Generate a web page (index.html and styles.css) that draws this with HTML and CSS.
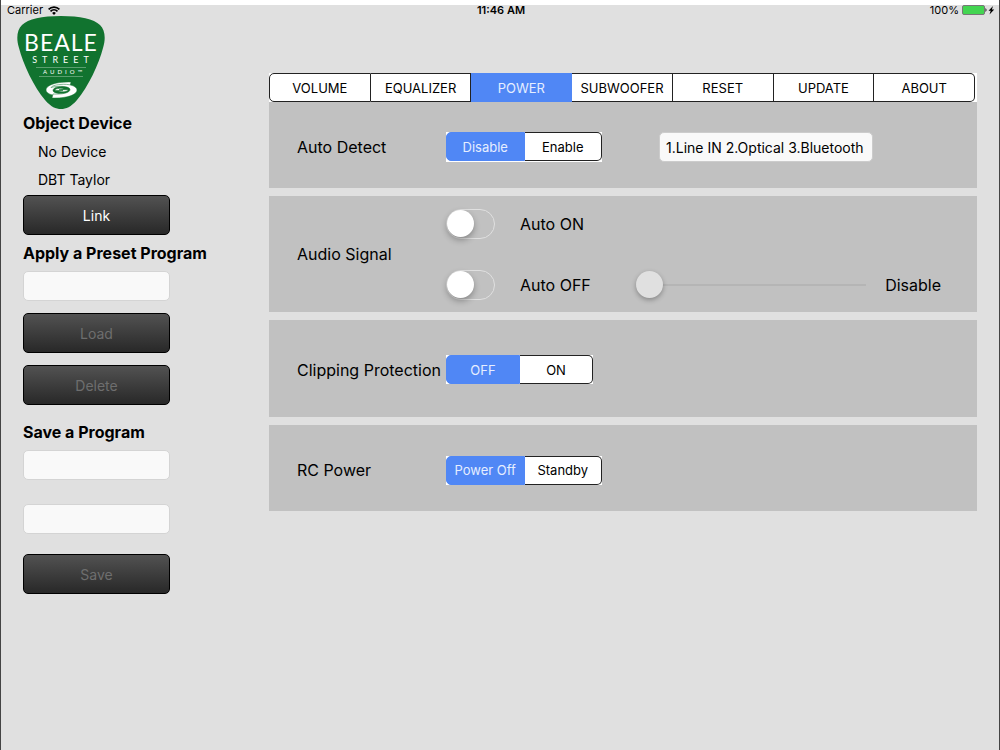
FILE: index.html
```
<!DOCTYPE html>
<html lang="en">
<head>
<meta charset="UTF-8">
<meta name="viewport" content="width=device-width, initial-scale=1">
<title>Beale Street Audio</title>
<link rel="stylesheet" href="styles.css">
</head>
<body>
<div class="app">

	<header class="status">
		<span class="carrier">Carrier
			<svg width="12" height="9" viewBox="0 0 12 9" fill="none" stroke="#000" stroke-width="1.7">
				<path d="M0.6 3.4a7.6 7.6 0 0 1 10.8 0"/>
				<path d="M2.5 5.4a5 5 0 0 1 7 0"/>
				<path d="M6 9L4.1 7a2.7 2.7 0 0 1 3.8 0z" fill="#000" stroke="none"/>
			</svg>
		</span>
		<span class="time">11:46 AM</span>
		<span class="battery">100%
			<svg width="33" height="10" viewBox="0 0 33 10">
				<rect x="0.5" y="0.5" width="22" height="9" rx="1.5" fill="#43d551" stroke="#777"/>
				<path d="M23.500 3q2 2 0 4z" fill="#000"/>
				<path d="M31 1l-4.500 4.700h2.200L27.500 9.500l4.700-5.100h-2.300z" fill="#000"/>
			</svg>
		</span>
	</header>

	<div class="main">
		<aside class="side">
			<svg class="logo" width="88" height="93" viewBox="0 0 88 93" role="img" aria-label="Beale Street Audio">
				<path d="M44 0C63 0 77 3 83 9C88 14 89 22 86 32C82 48 71 71 60 84C54 91 49 93 44 93C39 93 34 91 28 84C17 71 6 48 2 32C-1 22 0 14 5 9C11 3 25 0 44 0z" fill="#11732f"/>
				<g fill="#fff" text-anchor="middle">
					<text class="logo-big" x="44" y="35">BEALE</text>
					<text class="logo-mid" x="46" y="47">STREET</text>
					<text class="logo-small" x="47" y="58">AUDIO™</text>
				</g>
				<path d="M19 51.500h50M22 60.500h44" stroke="#6fab80" stroke-width="0.800"/>
				<g fill="#fff" stroke="#11732f" stroke-width="0.500">
					<path d="M54 66C40 65.500 29 69 29 74C29 78 37 80.500 46 79.500C51 79 54 78 55 76.500C48 78.500 36 78 36 74.500C36 71 44 69.500 53 70z"/>
					<path d="M54 66C40 65.500 29 69 29 74C29 78 37 80.500 46 79.500C51 79 54 78 55 76.500C48 78.500 36 78 36 74.500C36 71 44 69.500 53 70z" transform="rotate(180 44.500 74)"/>
					<path d="M38 74.500C38 72.500 43 72 47 72.500L42 73.700H51C51 75.500 46 76.200 41 75.500L46 74.500z"/>
				</g>
			</svg>

			<h2>Object Device</h2>
			<p class="device">No Device</p>
			<p class="device">DBT Taylor</p>
			<button type="button" class="btn link">Link</button>

			<h2><label for="preset">Apply a Preset Program</label></h2>
			<input type="text" id="preset" class="txt preset">
			<button type="button" class="btn" disabled>Load</button>
			<button type="button" class="btn" disabled>Delete</button>

			<h2 class="save-head">Save a Program</h2>
			<input type="text" class="txt save-name" aria-label="Program name">
			<input type="text" class="txt save-note" aria-label="Program description">
			<button type="button" class="btn" disabled>Save</button>
		</aside>

		<main class="content">
			<nav class="seg tabs">
				<button type="button">VOLUME</button>
				<button type="button">EQUALIZER</button>
				<button type="button" class="on">POWER</button>
				<button type="button">SUBWOOFER</button>
				<button type="button">RESET</button>
				<button type="button">UPDATE</button>
				<button type="button">ABOUT</button>
			</nav>

			<section class="panel">
				<h3>Auto Detect</h3>
				<div class="detect">
					<div class="seg seg-wide">
						<button type="button" class="on">Disable</button>
						<button type="button">Enable</button>
					</div>
					<input type="text" class="txt inputs" value="1.Line IN 2.Optical 3.Bluetooth" aria-label="Input priority">
				</div>
			</section>

			<section class="panel panel-audio">
				<h3>Audio Signal</h3>
				<div class="signal">
					<div class="signal-row">
						<input type="checkbox" id="autoOn" class="switch">
						<label for="autoOn">Auto ON</label>
					</div>
					<div class="signal-row">
						<input type="checkbox" id="autoOff" class="switch">
						<label for="autoOff">Auto OFF</label>
						<input type="range" id="offTime" class="slider" min="0" max="100" value="0" disabled>
						<label for="offTime">Disable</label>
					</div>
				</div>
			</section>

			<section class="panel panel-clip">
				<h3>Clipping Protection</h3>
				<div class="seg seg-narrow">
					<button type="button" class="on">OFF</button>
					<button type="button">ON</button>
				</div>
			</section>

			<section class="panel">
				<h3>RC Power</h3>
				<div class="seg seg-wide">
					<button type="button" class="on">Power Off</button>
					<button type="button">Standby</button>
				</div>
			</section>
		</main>
	</div>

</div>
</body>
</html>
```

FILE: styles.css
```
* { box-sizing: border-box; }

body {
	margin: 0;
	font-family: Inter, "Liberation Sans", sans-serif;
	color: #000;
}

button, input { font-family: inherit; }

.app {
	min-height: 100vh;
	background-color: #e0e0e0;
	border-left: 1px solid #444;
	border-right: 1px solid #444;
	box-shadow: inset 0 5px #fff;
}

/* status bar */
.status {
	display: grid;
	grid-template-columns: 1fr auto 1fr;
	padding: 4px 4px 0 6px;
	font-size: 11px;
	line-height: 12px;
}

.status span {
	display: flex;
	align-items: center;
	gap: 5px;
}

.status .time { font-weight: 600; }

.status .battery {
	justify-content: flex-end;
	gap: 3px;
}

.main { display: flex; }

/* left side */
.side {
	flex: 0 0 268px;
	display: flex;
	flex-direction: column;
	align-items: flex-start;
	padding-left: 22px;
}

.logo { margin-left: -6px; }

.logo-big { font: 400 23px Lato, sans-serif; letter-spacing: 1px; }
.logo-mid { font: 400 9px Lato, sans-serif; letter-spacing: 5px; }
.logo-small { font: 400 6px Lato, sans-serif; letter-spacing: 3px; }

h2 {
	margin: 4px 0 5px;
	font-size: 16px;
	line-height: 20px;
	font-weight: 700;
}

.device {
	margin: 0 0 0 15px;
	font-size: 14px;
	line-height: 28px;
}

.btn {
	width: 147px;
	height: 40px;
	margin-bottom: 12px;
	border: 1px solid #000;
	border-radius: 5px;
	background-image: linear-gradient(#525252, #282828);
	color: #fff;
	font-size: 14px;
}

.btn:disabled { color: #6e6e6e; }

.txt {
	width: 147px;
	height: 30px;
	padding: 0 6px;
	border: 1px solid #d4d4d4;
	border-radius: 5px;
	background-color: #f9f9f9;
	font-size: 14px;
}

.link { margin: 1px 0 4px; }
.preset { margin: 3px 0 12px; }
.save-head { margin: 5px 0 8px; }
.save-name { margin-bottom: 24px; }
.save-note { margin-bottom: 20px; }

/* right side */
.content {
	flex: 1;
	padding: 57px 22px 0 0;
}

/* segmented buttons */
.seg {
	display: flex;
	background-color: #fff;
}

.seg button {
	flex: 1 1 0;
	height: 29px;
	padding: 0;
	border: 1px solid #222;
	border-left-width: 0;
	background-color: #fff;
	color: #000;
	font-size: 13px;
}

.seg button:first-child {
	border-left-width: 1px;
	border-radius: 5px 0 0 5px;
}

.seg button:last-child { border-radius: 0 5px 5px 0; }

.seg .on, .seg .on:first-child {
	border-color: #5087f5;
	background-color: #5087f5;
	color: #e6eeff;
}

.tabs { padding-right: 2px; }
.seg-wide { width: 156px; }
.seg-narrow { width: 147px; }

.panel {
	display: grid;
	grid-template-columns: 149px 1fr;
	align-items: center;
	min-height: 86px;
	margin-bottom: 8px;
	padding: 4px 36px 0 28px;
	background-color: #c1c1c1;
}

.panel-audio {
	min-height: 116px;
	padding-top: 0;
}

.panel-clip {
	min-height: 97px;
	padding-top: 2px;
}

h3 {
	margin: 0;
	font-size: 16px;
	line-height: 20px;
	font-weight: 400;
	white-space: nowrap;
}

.detect {
	display: flex;
	gap: 57px;
}

.inputs {
	width: 214px;
	border-color: #ccc;
}

.signal {
	display: grid;
	gap: 31px;
}

.signal-row {
	display: grid;
	grid-template-columns: 74px 116px 1fr auto;
	align-items: center;
	font-size: 16px;
}

.switch {
	appearance: none;
	width: 49px;
	height: 30px;
	margin: 0;
	border: 1px solid #e0e0e0;
	border-radius: 15px;
}

.switch::before {
	content: "";
	display: block;
	width: 27px;
	height: 27px;
	border-radius: 50%;
	background-color: #fff;
	box-shadow: 0 3px 6px rgba(0, 0, 0, 0.3);
}

.switch:checked { background-color: #43d551; }
.switch:checked::before { margin-left: 20px; }

.slider {
	appearance: none;
	width: auto;
	min-width: 0;
	height: 27px;
	margin: 0 19px 0 0;
	background: linear-gradient(#b5b5b5, #b5b5b5) center / 100% 2px no-repeat;
}

.slider::-webkit-slider-thumb {
	appearance: none;
	width: 27px;
	height: 27px;
	border-radius: 50%;
	background-color: #e0e0e0;
	box-shadow: 0 2px 5px rgba(0, 0, 0, 0.3);
}
```
